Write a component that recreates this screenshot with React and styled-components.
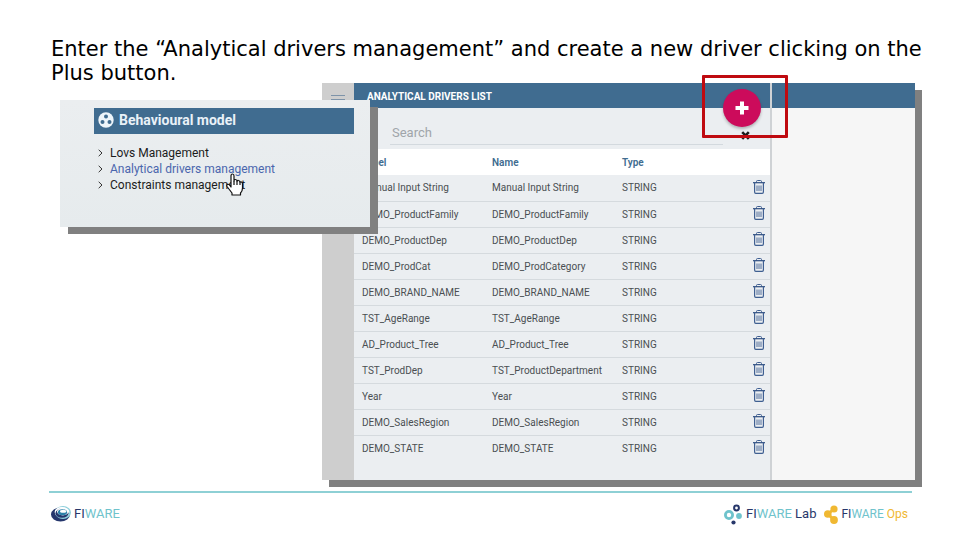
import React from "react";
import styled, { createGlobalStyle, css } from "styled-components";

const navy = "#406c90";

const GlobalStyle = createGlobalStyle`
  * { box-sizing: border-box; }
  body { margin: 0; background: #fff; font-family: Roboto, "Liberation Sans", sans-serif; }
`;

const Slide = styled.main`
  display: flex;
  flex-direction: column;
  padding: 37px 24px 0 48px;
`;

const Title = styled.h1`
  margin: 0;
  padding-left: 3px;
  font: 400 21px/24px "DejaVu Sans", Verdana, sans-serif;
  color: #000;
`;

const Stage = styled.section`
  position: relative;
  margin-top: -2px;
  padding: 0 21px 0 274px;
`;

const AppWindow = styled.div`
  display: grid;
  grid-template-columns: 32px minmax(300px, 416px) 1fr;
  box-shadow: 7px 7px 0 #808080;
`;

const Rail = styled.nav`
  background: #cecece;
  padding: 8px;
`;

const MenuButton = styled.button`
  display: block;
  padding: 0;
  border: 0;
  background: none;
`;

const ListPane = styled.section`
  position: relative;
  background: #ebeef1;
  padding-bottom: 19px;
`;

const Bar = styled.header`
  height: 25px;
  background: ${navy};
  padding-left: 13px;
`;

const BarTitle = styled.h2`
  margin: 0;
  font-size: 10px;
  line-height: 27px;
  font-weight: 700;
  color: #fff;
`;

const SearchRow = styled.div`
  display: flex;
  align-items: flex-end;
  height: 41px;
  padding: 0 20px 4px 36px;
`;

const SearchInput = styled.input`
  flex: 1;
  min-width: 0;
  height: 24px;
  margin-right: 18px;
  padding: 0 2px;
  border: 0;
  border-bottom: 1px solid #d3d9de;
  background: transparent;
  font: 400 13px Roboto, sans-serif;
  &::placeholder { color: #a0a5aa; opacity: 1; }
`;

const IconButton = styled.button`
  display: block;
  padding: 0;
  border: 0;
  background: none;
  line-height: 0;
`;

const ClearButton = styled(IconButton)`
  margin-bottom: 5px;
`;

const DeleteButton = styled(IconButton)`
  padding-bottom: 2px;
`;

const AddButton = styled.button`
  position: absolute;
  top: 6px;
  right: 9px;
  display: grid;
  place-items: center;
  width: 38px;
  height: 38px;
  padding: 0;
  border: 0;
  border-radius: 50%;
  background: #cc0b5b;
  box-shadow: 0 2px 3px rgba(0, 0, 0, 0.25);
`;

const Highlight = styled.div`
  position: absolute;
  z-index: 1;
  top: -8px;
  right: -18px;
  width: 86px;
  height: 63px;
  border: 3px solid #bf0a10;
  border-radius: 1px;
  pointer-events: none;
`;

const Table = styled.table`
  width: 100%;
  table-layout: fixed;
  border-collapse: collapse;
  color: #4a4e52;
  font-size: 10px;
  text-align: left;
  thead { background: #fff; color: ${navy}; }
  tbody tr + tr { border-top: 1px solid #d5dade; }
`;

const cell = css`
  height: 26px;
  padding: 0 0 0 8px;
  width: ${(p) => p.$width || "auto"};
`;

const Head = styled.th`
  ${cell}
  font-weight: 600;
`;

const Cell = styled.td`
  ${cell}
`;

const DetailPane = styled.section`
  border-left: 2px solid #cfd2d5;
  background: #f6f6f6;
`;

const MenuCard = styled.aside`
  position: absolute;
  top: 17px;
  left: 12px;
  width: 310px;
  height: 127px;
  padding: 8px 16px 0 34px;
  background: linear-gradient(#ebeef0, #e6ebed);
  box-shadow: 8px 7px 0 #808080;
`;

const MenuHeader = styled.h2`
  display: flex;
  align-items: center;
  gap: 5px;
  height: 26px;
  margin: 0;
  padding: 0 4px 2px;
  background: ${navy};
  color: #e9f1f8;
  font-size: 14px;
  font-weight: 700;
`;

const MenuList = styled.ul`
  margin: 11px 0 0;
  padding: 0 0 0 4px;
  list-style: none;
`;

const MenuItem = styled.li`
  display: flex;
  align-items: center;
  gap: 7px;
  height: 16px;
`;

const MenuLink = styled.a`
  font-size: 12px;
  line-height: 16px;
  text-decoration: none;
  color: ${(p) => (p.$active ? "#4a66ad" : "#1c1c1c")};
`;

const Pointer = styled.svg`
  position: absolute;
  top: 73px;
  left: 165px;
`;

const Footer = styled.footer`
  display: flex;
  align-items: center;
  margin: 11px 24px 0 1px;
  padding: 9px 4px 0 2px;
  border-top: 2px solid #8ed0d5;
`;

const Brand = styled.div`
  display: flex;
  align-items: center;
  gap: 3px;
  height: 24px;
  margin-left: ${(p) => (p.$push ? "auto" : "8px")};
  &:first-child { margin-left: 0; }
`;

const BrandText = styled.span`
  font: 400 ${(p) => p.$size || "13px"}/16px Roboto, sans-serif;
  color: #27376a;
`;

const Tint = styled.span`
  color: ${(p) => p.$color};
`;

const MenuIcon = () => (
  <svg width="16" height="16" viewBox="0 0 16 16" stroke="#7d93a9" strokeWidth="1.200">
    <path d="M1 4.500h14M1 8.500h14M1 12.500h14" />
  </svg>
);

const TrashIcon = () => (
  <svg width="12" height="14" viewBox="0 0 12 14" fill="none" stroke="#3f5f91">
    <path d="M3.500 2.500V1.500Q3.500 .5 4.500 .5H7.500Q8.500 .5 8.500 1.500V2.500" />
    <path d="M0 2.700H12" stroke="#2c4c80" strokeWidth="1.200" />
    <path d="M1.600 3V12Q1.600 13.300 2.800 13.300H9.200Q10.400 13.300 10.400 12V3" strokeWidth="1.200" />
    <path d="M4 5.500V11M6 5.500V11M8 5.500V11" strokeWidth=".9" />
  </svg>
);

const CrossIcon = () => (
  <svg width="9" height="9" viewBox="0 0 9 9" stroke="#1b1b1b" strokeWidth="2.600">
    <path d="M1.200 1.200L7.800 7.800M7.800 1.200L1.200 7.800" />
  </svg>
);

const PlusIcon = () => (
  <svg width="14" height="14" viewBox="0 0 14 14" stroke="#fff" strokeWidth="4">
    <path d="M7 .5V13.500M.5 7H13.500" />
  </svg>
);

const ModelIcon = () => (
  <svg width="16" height="16" viewBox="0 0 16 16">
    <circle cx="8" cy="8" r="7.700" fill="#eef5fa" />
    <g fill={navy}>
      <circle cx="8" cy="4.500" r="2" />
      <circle cx="4.500" cy="10" r="2" />
      <circle cx="11.500" cy="10" r="2" />
    </g>
  </svg>
);

const Chevron = () => (
  <svg width="5" height="8" viewBox="0 0 5 8" fill="none" stroke="#333">
    <path d="M.7 .8L4 4L.7 7.200" />
  </svg>
);

const FiwareMark = () => (
  <svg width="20" height="16" viewBox="0 0 20 16">
    <ellipse cx="9.500" cy="8.500" rx="9.500" ry="7" fill="#25366c" />
    <ellipse cx="12" cy="6.500" rx="8" ry="6.500" fill="#8fd0dc" />
    <ellipse cx="11" cy="6" rx="7.400" ry="5" fill="#fff" />
    <ellipse cx="11" cy="7.200" rx="6.500" ry="4.600" fill="#25366c" />
    <ellipse cx="11.800" cy="5.600" rx="5.800" ry="3.800" fill="#fff" />
    <ellipse cx="11.500" cy="6.300" rx="4.600" ry="3" fill="#2b7fa8" />
    <ellipse cx="12.200" cy="5.200" rx="3.200" ry="1.500" fill="#fff" />
  </svg>
);

const LabMark = () => (
  <svg width="19" height="21" viewBox="0 0 19 21" fill="none">
    <circle cx="5" cy="11" r="3.600" stroke="#6fc3cc" strokeWidth="2.800" />
    <circle cx="12.500" cy="4" r="2.400" stroke="#27376a" strokeWidth="2" />
    <circle cx="15" cy="12" r="2.900" fill="#6fc3cc" />
    <circle cx="9.500" cy="18.500" r="2.100" fill="#27376a" />
  </svg>
);

const OpsMark = () => (
  <svg width="14" height="19" viewBox="0 0 14 19" fill="#f0b832">
    <path d="M10 4L4 9L10 15" fill="none" stroke="#f0b832" strokeWidth="2.800" />
    <circle cx="10" cy="4" r="3.600" />
    <circle cx="3.800" cy="9" r="3.800" />
    <circle cx="10" cy="15" r="3.900" />
  </svg>
);

const Hand = () => (
  <Pointer width="20" height="24" viewBox="0 0 20 24" fill="#fff" stroke="#111" strokeWidth="1.200" strokeLinejoin="round">
    <path d="M6 14V3Q6 1 7.500 1Q9 1 9 3V8Q9 6.500 10.500 6.500Q12 6.500 12 8.500Q12.300 7.300 13.500 7.500Q15 7.700 15 9.500Q15.500 8.500 16.500 9Q17.500 9.500 17.500 11V15Q17.500 18 15.500 20V22H7V20L2 13.500Q1.200 12 2.500 11.300Q3.700 11 4.700 12.200Z" />
    <path d="M9 8V12M12 8.500V12M15 9.500V12" />
  </Pointer>
);

const drivers = [
  ["Manual Input String", "Manual Input String"],
  ["DEMO_ProductFamily", "DEMO_ProductFamily"],
  ["DEMO_ProductDep", "DEMO_ProductDep"],
  ["DEMO_ProdCat", "DEMO_ProdCategory"],
  ["DEMO_BRAND_NAME", "DEMO_BRAND_NAME"],
  ["TST_AgeRange", "TST_AgeRange"],
  ["AD_Product_Tree", "AD_Product_Tree"],
  ["TST_ProdDep", "TST_ProductDepartment"],
  ["Year", "Year"],
  ["DEMO_SalesRegion", "DEMO_SalesRegion"],
  ["DEMO_STATE", "DEMO_STATE"],
];

const menu = ["Lovs Management", "Analytical drivers management", "Constraints management"];

const Fiware = () => (
  <>FI<Tint $color="#6fc3cc">WARE</Tint></>
);

export default function App() {
  return (
    <Slide>
      <GlobalStyle />
      <Title>
        Enter the “Analytical drivers management” and create a new driver clicking on the Plus button.
      </Title>
      <Stage>
        <AppWindow>
          <Rail>
            <MenuButton aria-label="Menu"><MenuIcon /></MenuButton>
          </Rail>
          <ListPane>
            <Bar><BarTitle>ANALYTICAL DRIVERS LIST</BarTitle></Bar>
            <SearchRow>
              <SearchInput type="text" placeholder="Search" aria-label="Search" />
              <ClearButton aria-label="Clear search"><CrossIcon /></ClearButton>
            </SearchRow>
            <Table>
              <thead>
                <tr>
                  <Head $width="130px">Label</Head>
                  <Head $width="130px">Name</Head>
                  <Head>Type</Head>
                  <Head $width="25px" aria-label="Actions" />
                </tr>
              </thead>
              <tbody>
                {drivers.map(([label, name]) => (
                  <tr key={label}>
                    <Cell>{label}</Cell>
                    <Cell>{name}</Cell>
                    <Cell>STRING</Cell>
                    <Cell>
                      <DeleteButton aria-label={`Delete ${label}`}><TrashIcon /></DeleteButton>
                    </Cell>
                  </tr>
                ))}
              </tbody>
            </Table>
            <AddButton aria-label="Add driver"><PlusIcon /></AddButton>
            <Highlight />
          </ListPane>
          <DetailPane><Bar /></DetailPane>
        </AppWindow>
        <MenuCard>
          <MenuHeader><ModelIcon />Behavioural model</MenuHeader>
          <MenuList>
            {menu.map((item, i) => (
              <MenuItem key={item}>
                <Chevron />
                <MenuLink href="#" $active={i === 1}>{item}</MenuLink>
              </MenuItem>
            ))}
          </MenuList>
          <Hand />
        </MenuCard>
      </Stage>
      <Footer>
        <Brand><FiwareMark /><BrandText><Fiware /></BrandText></Brand>
        <Brand $push><LabMark /><BrandText><Fiware /> Lab</BrandText></Brand>
        <Brand><OpsMark /><BrandText $size="12px"><Fiware /> <Tint $color="#f0b832">Ops</Tint></BrandText></Brand>
      </Footer>
    </Slide>
  );
}
